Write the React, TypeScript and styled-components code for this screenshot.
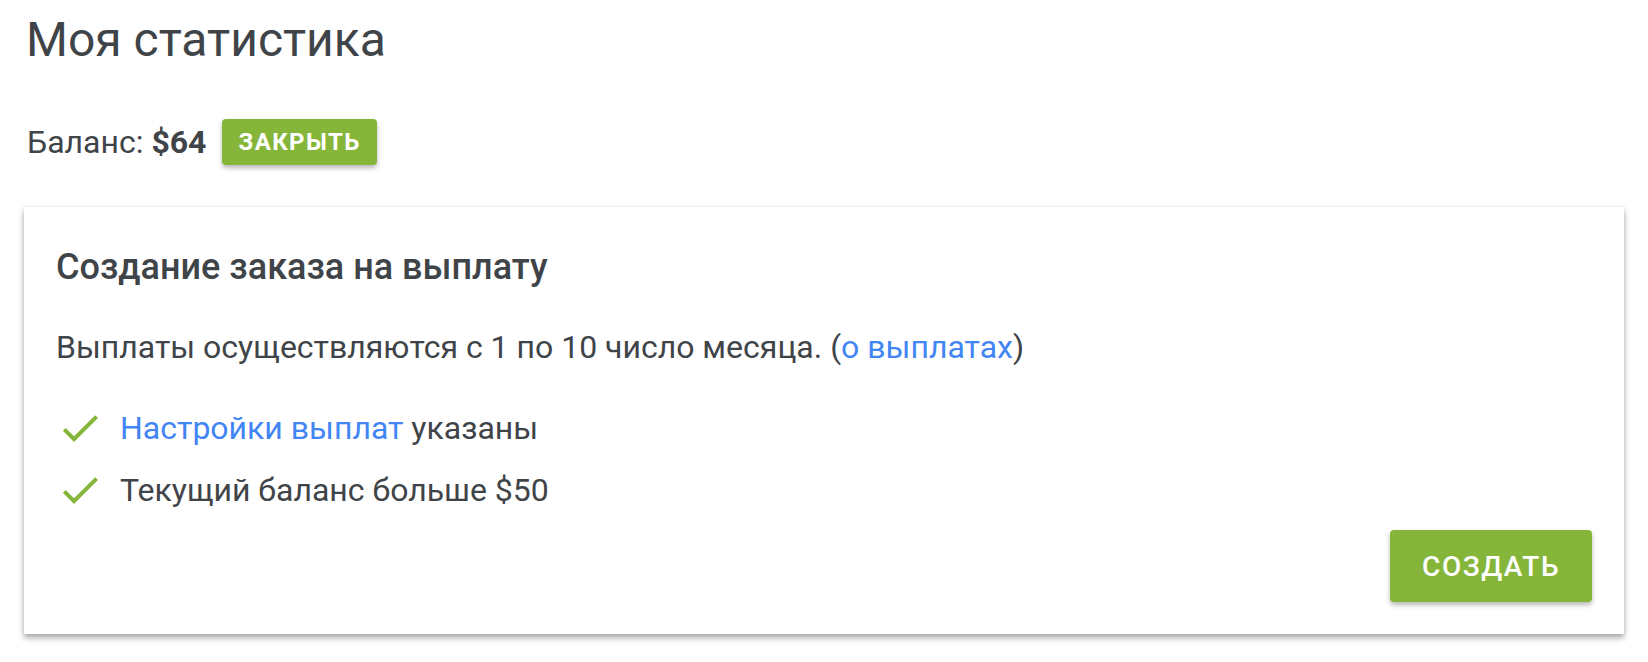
import React from 'react';
import styled, { createGlobalStyle } from 'styled-components';

const GlobalStyle = createGlobalStyle`
  body {
    margin: 0;
    background: #fff;
    font-family: Roboto, "Liberation Sans", sans-serif;
    color: #3f4448;
  }
`;

const Page = styled.main`
  padding: 0 24px 24px;
`;

const Title = styled.h1`
  margin: 12px 0 0 2px;
  font-size: 48px;
  line-height: 56px;
  font-weight: 400;
`;

const BalanceRow = styled.div`
  display: flex;
  align-items: center;
  gap: 16px;
  margin: 51px 0 0 3px;
  height: 46px;
  font-size: 32px;

  b {
    font-weight: 700;
  }
`;

const Button = styled.button<{ $big?: boolean }>`
  border: 0;
  border-radius: 4px;
  background: #85b63a;
  color: #fff;
  font-family: Roboto, "Liberation Sans", sans-serif;
  font-weight: ${(p) => (p.$big ? 500 : 700)};
  text-transform: uppercase;
  cursor: pointer;
  box-shadow: 0 3px 5px rgba(0, 0, 0, 0.28);
  height: ${(p) => (p.$big ? '72px' : '46px')};
  padding: ${(p) => (p.$big ? '0 32px' : '0 16px')};
  font-size: ${(p) => (p.$big ? '28px' : '24px')};
  letter-spacing: ${(p) => (p.$big ? '1.5px' : '1.4px')};
`;

const Card = styled.section`
  margin-top: 42px;
  padding: 40px 32px 32px;
  background: #fff;
  box-shadow: 0 4px 6px rgba(0, 0, 0, 0.32), 0 0 4px rgba(0, 0, 0, 0.08);
`;

const CardTitle = styled.h2`
  margin: 0;
  font-size: 36px;
  line-height: 40px;
  font-weight: 500;
`;

const Text = styled.p`
  margin: 40px 0 0;
  font-size: 32px;
  line-height: 40px;
`;

const Link = styled.a`
  color: #4285f4;
  text-decoration: none;
`;

const Checks = styled.ul`
  list-style: none;
  margin: 37px 0 0;
  padding: 0;
  display: flex;
  flex-direction: column;
  gap: 14px;
`;

const CheckItem = styled.li`
  display: flex;
  align-items: center;
  gap: 16px;
  height: 48px;
  font-size: 32px;
`;

const Actions = styled.div`
  display: flex;
  justify-content: flex-end;
  margin-top: 16px;
`;

const CheckIcon = () => (
  <svg width="48" height="48" viewBox="0 0 24 24" fill="#85b63a">
    <path d="M9 16.17L4.83 12l-1.42 1.41L9 19 21 7l-1.41-1.41z" />
  </svg>
);

export default function App() {
  return (
    <Page>
      <GlobalStyle />
      <Title>Моя статистика</Title>
      <BalanceRow>
        <span>
          Баланс: <b>$64</b>
        </span>
        <Button>Закрыть</Button>
      </BalanceRow>
      <Card>
        <CardTitle>Создание заказа на выплату</CardTitle>
        <Text>
          Выплаты осуществляются с 1 по 10 число месяца. (<Link href="#">о выплатах</Link>)
        </Text>
        <Checks>
          <CheckItem>
            <CheckIcon />
            <span>
              <Link href="#">Настройки выплат</Link> указаны
            </span>
          </CheckItem>
          <CheckItem>
            <CheckIcon />
            <span>Текущий баланс больше $50</span>
          </CheckItem>
        </Checks>
        <Actions>
          <Button $big>Создать</Button>
        </Actions>
      </Card>
    </Page>
  );
}
